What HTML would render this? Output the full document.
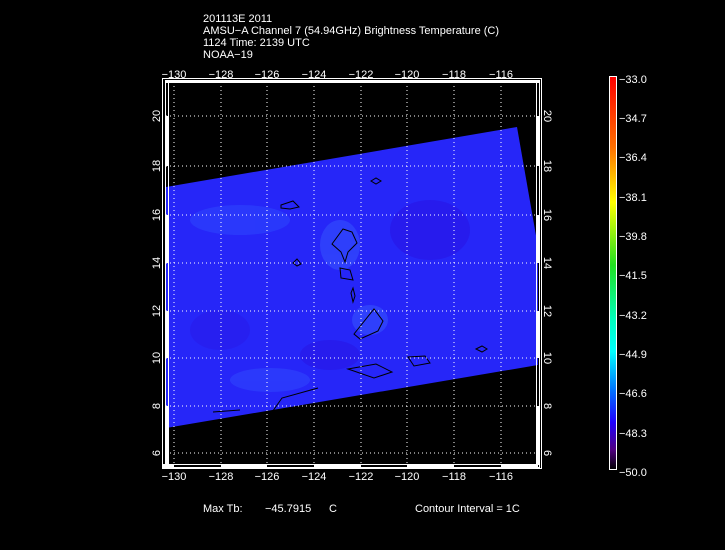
<!DOCTYPE html>
<html><head><style>
html,body{margin:0;padding:0;background:#000;}
svg{display:block}
text{font-family:"Liberation Sans",sans-serif;fill:#fff;font-size:11px}
</style></head><body>
<svg width="725" height="550" viewBox="0 0 725 550" xmlns="http://www.w3.org/2000/svg">
<defs>
<linearGradient id="cb" x1="0" y1="0" x2="0" y2="1">
<stop offset="0" stop-color="#ff0000"/>
<stop offset="0.18" stop-color="#ff7000"/>
<stop offset="0.32" stop-color="#ffff00"/>
<stop offset="0.48" stop-color="#20e020"/>
<stop offset="0.62" stop-color="#00ffc0"/>
<stop offset="0.7" stop-color="#00ffff"/>
<stop offset="0.8" stop-color="#0070ff"/>
<stop offset="0.88" stop-color="#2000ff"/>
<stop offset="0.95" stop-color="#500080"/>
<stop offset="1" stop-color="#000000"/>
</linearGradient>
<clipPath id="dc"><polygon points="166,187 517,127 538,247 538,365 166,428"/></clipPath>
</defs>
<g>
<text x="203" y="22">201113E 2011</text>
<text x="203" y="34">AMSU−A Channel 7 (54.94GHz) Brightness Temperature (C)</text>
<text x="203" y="46">1124 Time: 2139 UTC</text>
<text x="203" y="58">NOAA−19</text>
</g>
<polygon points="166,187 517,127 538,247 538,365 166,428" fill="#2626f8"/>
<g clip-path="url(#dc)" opacity="0.45">
<ellipse cx="340" cy="245" rx="20" ry="25" fill="#3a60ff"/>
<ellipse cx="370" cy="320" rx="18" ry="15" fill="#3a60ff"/>
<ellipse cx="270" cy="380" rx="40" ry="12" fill="#3350ff"/>
<ellipse cx="240" cy="220" rx="50" ry="15" fill="#3050ff"/>
<ellipse cx="430" cy="230" rx="40" ry="30" fill="#2a10e0"/>
<ellipse cx="330" cy="355" rx="30" ry="15" fill="#2a10e0"/>
<ellipse cx="220" cy="330" rx="30" ry="20" fill="#2a18e8"/>
</g>
<g fill="none" stroke="#000" stroke-width="1">
<path d="M332,244 L343,229 L352,232 L357,243 L348,252 L345,262 L341,252 Z"/>
<path d="M340,268 L350,270 L353,280 L341,278 Z"/>
<path d="M354,334 L374,309 L383,321 L378,331 L360,339 Z"/>
<path d="M281,205 L293,201 L299,207 L290,209 L281,208 Z"/>
<path d="M348,369 L376,364 L392,372 L374,378 Z"/>
<path d="M408,357 L425,356 L430,363 L414,366 Z"/>
<path d="M476,349 L482,346 L487,349 L482,352 Z"/>
<path d="M371,181 L376,178 L381,181 L376,184 Z"/>
<path d="M293,263 L297,259 L301,264 L297,266 Z"/>
<path d="M351,293 L353,288 L355,296 L353,302 Z"/>
<path d="M318,388 L282,398 L270,415 L258,417"/>
<path d="M213,412 L240,410"/>
</g>
<g stroke="#fff" stroke-width="1" stroke-dasharray="1,3">
<line x1="174" y1="82" x2="174" y2="464"/><line x1="221" y1="82" x2="221" y2="464"/>
<line x1="267" y1="82" x2="267" y2="464"/><line x1="314" y1="82" x2="314" y2="464"/>
<line x1="361" y1="82" x2="361" y2="464"/><line x1="407" y1="82" x2="407" y2="464"/>
<line x1="454" y1="82" x2="454" y2="464"/><line x1="501" y1="82" x2="501" y2="464"/>
<line x1="166" y1="116" x2="538" y2="116"/><line x1="166" y1="166" x2="538" y2="166"/>
<line x1="166" y1="215" x2="538" y2="215"/><line x1="166" y1="263" x2="538" y2="263"/>
<line x1="166" y1="311" x2="538" y2="311"/><line x1="166" y1="358" x2="538" y2="358"/>
<line x1="166" y1="406" x2="538" y2="406"/><line x1="166" y1="453" x2="538" y2="453"/>
</g>
<rect x="162.5" y="78.5" width="379" height="390" fill="none" stroke="#fff"/>
<rect x="165" y="80" width="375" height="3" fill="#fff"/>
<g fill="none" stroke="#fff" stroke-width="1">
<rect x="165.5" y="81.5" width="3" height="383"/>
<rect x="536.5" y="81.5" width="3" height="383"/>
<rect x="165.5" y="464.5" width="374" height="3"/>
</g>
<g fill="#fff">
<rect x="165" y="116" width="4" height="50"/><rect x="165" y="215" width="4" height="48"/>
<rect x="165" y="311" width="4" height="47"/><rect x="165" y="406" width="4" height="58"/>
<rect x="536" y="116" width="4" height="50"/><rect x="536" y="215" width="4" height="48"/>
<rect x="536" y="311" width="4" height="47"/><rect x="536" y="406" width="4" height="58"/>
<rect x="162" y="464" width="12" height="4"/><rect x="221" y="464" width="46" height="4"/>
<rect x="314" y="464" width="47" height="4"/><rect x="407" y="464" width="47" height="4"/>
<rect x="501" y="464" width="37" height="4"/>
</g>
<g text-anchor="middle">
<text x="174" y="78">−130</text><text x="221" y="78">−128</text><text x="267" y="78">−126</text>
<text x="314" y="78">−124</text><text x="361" y="78">−122</text><text x="407" y="78">−120</text>
<text x="454" y="78">−118</text><text x="501" y="78">−116</text>
<text x="174" y="480">−130</text><text x="221" y="480">−128</text><text x="267" y="480">−126</text>
<text x="314" y="480">−124</text><text x="361" y="480">−122</text><text x="407" y="480">−120</text>
<text x="454" y="480">−118</text><text x="501" y="480">−116</text>
</g>
<g text-anchor="middle">
<text transform="translate(160,116) rotate(-90)">20</text>
<text transform="translate(160,166) rotate(-90)">18</text>
<text transform="translate(160,215) rotate(-90)">16</text>
<text transform="translate(160,263) rotate(-90)">14</text>
<text transform="translate(160,311) rotate(-90)">12</text>
<text transform="translate(160,358) rotate(-90)">10</text>
<text transform="translate(160,406) rotate(-90)">8</text>
<text transform="translate(160,453) rotate(-90)">6</text>
<text transform="translate(544,116) rotate(90)">20</text>
<text transform="translate(544,166) rotate(90)">18</text>
<text transform="translate(544,215) rotate(90)">16</text>
<text transform="translate(544,263) rotate(90)">14</text>
<text transform="translate(544,311) rotate(90)">12</text>
<text transform="translate(544,358) rotate(90)">10</text>
<text transform="translate(544,406) rotate(90)">8</text>
<text transform="translate(544,453) rotate(90)">6</text>
</g>
<rect x="609.5" y="76.5" width="7" height="393" fill="url(#cb)" stroke="#fff"/>
<g>
<text x="619" y="83">−33.0</text><text x="619" y="122">−34.7</text><text x="619" y="161">−36.4</text>
<text x="619" y="201">−38.1</text><text x="619" y="240">−39.8</text><text x="619" y="279">−41.5</text>
<text x="619" y="319">−43.2</text><text x="619" y="358">−44.9</text><text x="619" y="397">−46.6</text>
<text x="619" y="437">−48.3</text><text x="619" y="476">−50.0</text>
</g>
<text x="203" y="512">Max Tb:</text>
<text x="265" y="512">−45.7915</text>
<text x="329" y="512">C</text>
<text x="415" y="512">Contour Interval = 1C</text>
</svg>
</body></html>
